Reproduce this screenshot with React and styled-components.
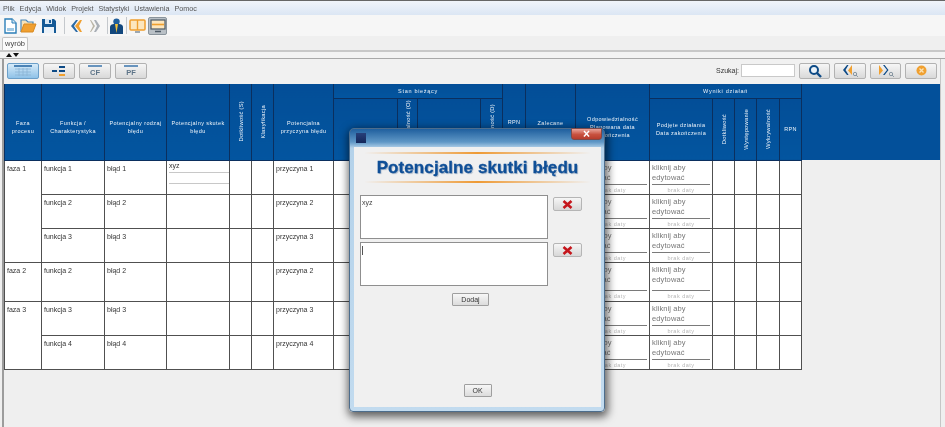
import React from "react";
import styled, { createGlobalStyle } from "styled-components";

const Global = createGlobalStyle`
  html, body { margin: 0; padding: 0; background: #efefef; }
  body { font-family: "Liberation Sans", Arial, sans-serif; overflow: hidden; }
`;

const Page = styled.div`
  position: relative;
  width: 945px;
  height: 427px;
  overflow: hidden;
  display: flex;
  flex-direction: column;
  background: #efefef;
  filter: blur(0.4px);
`;
const MenuBar = styled.div`
  height: 14px;
  border-top: 1px solid #666;
  display: flex;
  align-items: center;
  gap: 5px;
  padding-left: 3px;
  background: linear-gradient(#f0f4fa, #dbe6f4);
`;
const MenuItem = styled.span`
  font-size: 7.2px;
  color: #555;
`;
const ToolBar = styled.div`
  height: 21px;
  display: flex;
  align-items: center;
  padding-left: 4px;
  background: #f6f6f6;
`;
const ToolIcon = styled.svg`
  display: block;
  flex: none;
  margin-right: ${(p) => p.$mr || 0}px;
`;
const ToolSep = styled.div`
  width: 1px;
  height: 17px;
  background: #c4c8cc;
  margin-right: ${(p) => p.$mr}px;
`;
const ViewToggle = styled.div`
  width: 19px;
  height: 18px;
  margin-right: 1px;
  display: flex;
  align-items: center;
  justify-content: center;
  border-radius: 2px;
  background: ${(p) => (p.$on ? "#b9c0c6" : "transparent")};
  border: 1px solid ${(p) => (p.$on ? "#8a949c" : "transparent")};
  box-sizing: border-box;
`;
const TabStrip = styled.div`
  height: 14px;
  padding-left: 2px;
  display: flex;
  align-items: flex-end;
  border-bottom: 2px solid #c8c8c8;
`;
const Tab = styled.div`
  width: 26px;
  height: 13px;
  box-sizing: border-box;
  background: #fbfbfb;
  border: 1px solid #c4c4c4;
  border-bottom: 0;
  border-radius: 2px 2px 0 0;
  font-size: 7.5px;
  color: #444;
  text-align: center;
  line-height: 12px;
`;
const SplitArrows = styled.div`
  height: 6px;
  padding-left: 6px;
  display: flex;
  gap: 1px;
  align-items: center;
  background: #f3f3f3;
  border-bottom: 1px solid #a9a9a9;
`;
const Arrow = styled.i`
  width: 0;
  height: 0;
  border-left: 3px solid transparent;
  border-right: 3px solid transparent;
  ${(p) => (p.$up ? "border-bottom: 4px solid #111;" : "border-top: 4px solid #111;")}
`;
const Panel = styled.div`
  flex: 1;
  margin: 0 4px 0 2px;
  border-left: 2px solid #9c9c9c;
  border-right: 1px solid #c6c6c6;
  display: flex;
  flex-direction: column;
  min-height: 0;
`;
const ActionBar = styled.div`
  height: 25px;
  box-sizing: border-box;
  display: flex;
  align-items: center;
  padding: 0 3px 2px 3px;
  gap: 4px;
  background: #f1f1f1;
`;
const ActionButton = styled.button`
  width: ${(p) => p.$w || 32}px;
  height: 16px;
  margin: 0;
  padding: 0;
  display: flex;
  align-items: center;
  justify-content: center;
  border-radius: 2px;
  border: 1px solid ${(p) => (p.$active ? "#6b9fc9" : "#b2b2b2")};
  background: ${(p) =>
    p.$active
      ? "linear-gradient(#d7ebf9, #8fc2e8)"
      : "linear-gradient(#f6f6f6, #d9d9d9)"};
`;
const Spacer = styled.div`
  flex: 1;
`;
const SearchLabel = styled.span`
  font-size: 7px;
  color: #333;
  margin-right: -2px;
`;
const SearchInput = styled.div`
  width: 52px;
  height: 11px;
  background: #fff;
  border: 1px solid #c9c9c9;
`;
const TableWrap = styled.div`
  flex: 1;
  background: linear-gradient(#03509a 0 76px, transparent 76px);
  background-repeat: no-repeat;
`;
const Grid = styled.table`
  width: 798px;
  table-layout: fixed;
  border-collapse: collapse;
  background: #fff;
`;
const HCell = styled.th`
  background: linear-gradient(#034e97, #03559f);
  border: 1px solid #0b2f5e;
  border-top: 0;
  color: #eef4fa;
  font-weight: normal;
  font-size: 5.5px;
  line-height: 8px;
  letter-spacing: ${(p) => (p.$group ? 0.7 : 0.4)}px;
  padding: ${(p) => p.$pt || 0}px 0 0;
  text-align: center;
  vertical-align: middle;
  overflow: hidden;
  white-space: nowrap;
`;
const Rotated = styled.span`
  display: inline-block;
  vertical-align: middle;
  writing-mode: vertical-rl;
  transform: rotate(180deg);
  white-space: nowrap;
  font-size: 5.8px;
  letter-spacing: 0.25px;
`;
const Cell = styled.td`
  border: 1px solid #505050;
  padding: 0;
  vertical-align: top;
  font-size: 7px;
  color: #333;
`;
const CellText = styled.div`
  padding: 4px 0 0 2px;
`;
const EffectField = styled.div`
  height: 11px;
  margin-left: 2px;
  line-height: 10px;
  box-sizing: border-box;
  border-bottom: 1px solid #c8c8c8;
  &:first-child { height: 12px; }
`;
const EditCell = styled.div`
  height: ${(p) => p.$h}px;
  display: flex;
  flex-direction: column;
  box-sizing: border-box;
  padding: 0 2px;
`;
const EditText = styled.div`
  flex: 1;
  padding-top: 2px;
  font-size: 7.5px;
  line-height: 10.5px;
  color: #777;
  letter-spacing: 0.1px;
`;
const DateText = styled.div`
  height: 10px;
  border-top: 1px solid #7a7a7a;
  font-size: 5.5px;
  line-height: 10px;
  color: #b5b5b5;
  text-align: center;
  letter-spacing: 0.5px;
`;

const Modal = styled.div`
  position: absolute;
  left: 349px;
  top: 128px;
  width: 256px;
  height: 284px;
  box-sizing: border-box;
  padding: 18px 3px 4px 4px;
  display: flex;
  border-radius: 5px 5px 4px 4px;
  border: 1px solid #4d6d8c;
  background: linear-gradient(#1f5f9e 0, #5f97c6 13px, #b4d2ea 19px, #c2dbef 100%);
  box-shadow: 1px 3px 8px 2px rgba(0, 0, 0, 0.6);
`;
const ModalIcon = styled.div`
  position: absolute;
  left: 6px;
  top: 4px;
  width: 10px;
  height: 10px;
  background: linear-gradient(#27407a, #14275a);
`;
const CloseButton = styled.div`
  position: absolute;
  right: 2px;
  top: -1px;
  width: 31px;
  height: 12px;
  border-radius: 0 0 3px 3px;
  background: linear-gradient(#e9a49a, #c8513f 55%, #b63c2c);
  border: 1px solid #7d4a4a;
  box-sizing: border-box;
  color: #fff;
  font-size: 12px;
  font-weight: bold;
  line-height: 10px;
  text-align: center;
`;
const ModalBody = styled.div`
  flex: 1;
  background: #f0f0f0;
  display: flex;
  flex-direction: column;
  align-items: stretch;
  padding: 5px 0 10px;
  box-sizing: border-box;
`;
const TitleBox = styled.div`
  margin: 0 11px;
  height: 31px;
  box-sizing: border-box;
  border-style: solid;
  border-width: 2px 0;
  border-image: linear-gradient(90deg, transparent, #ee9a35 50%, transparent) 1;
  display: flex;
  align-items: center;
  justify-content: center;
`;
const Title = styled.h1`
  margin: 0;
  font-family: "Liberation Sans", Arial, sans-serif;
  font-size: 17px;
  font-weight: bold;
  color: #0f4f97;
  letter-spacing: 0.1px;
  -webkit-text-stroke: 0.3px #0f4f97;
  text-shadow: 1px 1px 1px #9fb0c4;
  white-space: nowrap;
`;
const EffectRow = styled.div`
  display: flex;
  margin: ${(p) => p.$mt}px 0 0 6px;
  align-items: flex-start;
  gap: 5px;
`;
const EffectArea = styled.div`
  width: 188px;
  height: 44px;
  background: #fff;
  border: 1px solid #8f8f8f;
  font-size: 7px;
  color: #444;
  padding: 3px 1px;
  box-sizing: border-box;
  line-height: 8px;
`;
const Caret = styled.span`
  display: inline-block;
  width: 1px;
  height: 9px;
  background: #555;
`;
const DeleteButton = styled.button`
  width: 29px;
  height: 14px;
  margin: ${(p) => p.$mt}px 0 0;
  padding: 0;
  display: flex;
  align-items: center;
  justify-content: center;
  background: linear-gradient(#f6f6f6, #d7d7d7);
  border: 1px solid #b5b5b5;
  border-radius: 2px;
`;
const Footer = styled.div`
  margin-top: 7px;
  display: flex;
  flex-direction: column;
  align-items: center;
  flex: 1;
`;
const DialogButton = styled.button`
  width: ${(p) => p.$w}px;
  height: 13px;
  margin: 0 ${(p) => p.$mr || 0}px 0 0;
  padding: 0;
  font-family: inherit;
  font-size: 7px;
  color: #333;
  background: linear-gradient(#f7f7f7, #dcdcdc);
  border: 1px solid #9f9f9f;
  border-radius: 1px;
`;

const NAVY = "#0d4a86";
const ORANGE = "#f0a030";

const DocIcon = () => (
  <ToolIcon width="13" height="16" viewBox="0 0 13 16" $mr={3}>
    <path d="M1 1h7l4 4v10H1z" fill="#fff" stroke="#2c7fb8" strokeWidth="1.4" />
    <path d="M8 1v4h4" fill="#cfe6f5" stroke="#2c7fb8" />
    <path d="M3 10h7v3H3z" fill="#9fc8e4" />
  </ToolIcon>
);
const FolderIcon = () => (
  <ToolIcon width="17" height="15" viewBox="0 0 17 15" $mr={4}>
    <path d="M1 14V2h5l2 2h5v3" fill="#f6e2b8" stroke="#4a87b8" strokeWidth="1.2" />
    <path d="M1 14l3-8h12l-3 8z" fill={ORANGE} stroke="#d98a20" />
  </ToolIcon>
);
const SaveIcon = () => (
  <ToolIcon width="16" height="16" viewBox="0 0 16 16" $mr={7}>
    <path d="M1 1h12l2 2v12H1z" fill="#155a96" />
    <path d="M4 1h7v5H4z" fill="#dbe9f5" />
    <path d="M3 9h10v6H3z" fill="#eaf2f9" />
    <path d="M8 2h2v3H8z" fill="#155a96" />
  </ToolIcon>
);
const BackIcon = () => (
  <ToolIcon width="11" height="12" viewBox="0 0 11 12" $mr={8}>
    <path d="M5 0 0 6l5 6h2L3 6l4-6z" fill="#2b6ba6" />
    <path d="M9 0 4 6l5 6h2L8 6l3-6z" fill={ORANGE} />
  </ToolIcon>
);
const ForwardIcon = () => (
  <ToolIcon width="10" height="12" viewBox="0 0 10 12" $mr={7}>
    <path d="M1 0l4 6-4 6H0l3-6-3-6z" fill="#b9b4a6" />
    <path d="M4 0h2l4 6-4 6H4l3-6z" fill="#a9afb6" />
  </ToolIcon>
);
const PersonIcon = () => (
  <ToolIcon width="13" height="16" viewBox="0 0 13 16" $mr={3}>
    <circle cx="6.5" cy="3.6" r="3.2" fill="#1f5f9c" />
    <path d="M0 16V9c0-2 2-3 4-3h5c2 0 4 1 4 3v7z" fill="#12477d" />
    <path d="M5 6h3L7 12l-.5 3L6 12z" fill="#f3c23a" />
  </ToolIcon>
);
const BookIcon = () => (
  <ToolIcon width="17" height="14" viewBox="0 0 17 14">
    <rect x="1" y="1" width="15" height="10" rx="1" fill="#fce6bd" stroke="#ef9f2e" strokeWidth="1.5" />
    <path d="M8.5 1v10" stroke="#ef9f2e" strokeWidth="1.4" />
    <path d="M6 13h5" stroke="#7f8e9a" strokeWidth="1.5" />
  </ToolIcon>
);
const MonitorIcon = () => (
  <ToolIcon width="16" height="14" viewBox="0 0 16 14">
    <rect x="1" y="1" width="14" height="9" fill="#fce6bd" stroke="#4d5a66" strokeWidth="1.2" />
    <path d="M2 5.5h12" stroke="#ef9f2e" strokeWidth="1.6" />
    <path d="M5 12.5h6" stroke="#4d5a66" strokeWidth="1.5" />
  </ToolIcon>
);
const TableGlyph = () => (
  <svg width="20" height="12" viewBox="0 0 20 12">
    <path d="M1 1h18" stroke="#2b6ba6" strokeWidth="1.6" />
    <path d="M2 4h16M2 7h16M2 10h16M6 3v8M10 3v8M14 3v8" stroke="#8bb4d4" strokeWidth="0.8" />
  </svg>
);
const TreeGlyph = () => (
  <svg width="15" height="12" viewBox="0 0 15 12">
    <path d="M0 5h5v2H0z" fill={NAVY} />
    <path d="M7 1h6v2H7zM7 5h6v2H7z" fill={NAVY} />
    <path d="M7 9h6v2H7z" fill={ORANGE} />
  </svg>
);
const LetterGlyph = ({ label }) => (
  <svg width="14" height="12" viewBox="0 0 14 12">
    <path d="M0 1h14" stroke="#2b6ba6" strokeWidth="1.4" />
    <text x="7" y="10" textAnchor="middle" fontSize="7.5" fontWeight="bold" fill="#5d7488" fontFamily="Liberation Sans">
      {label}
    </text>
  </svg>
);
const SearchGlyph = () => (
  <svg width="14" height="14" viewBox="0 0 14 14">
    <circle cx="6" cy="6" r="4" fill="#eaf2f9" stroke={NAVY} strokeWidth="2" />
    <path d="M9 9l4 4" stroke={NAVY} strokeWidth="2.4" />
  </svg>
);
const MiniLens = () => (
  <g>
    <circle cx="13" cy="10" r="1.7" fill="none" stroke="#7d8d9a" strokeWidth="0.9" />
    <path d="M14.2 11.2l1.6 1.6" stroke="#7d8d9a" />
  </g>
);
const PrevGlyph = () => (
  <svg width="16" height="13" viewBox="0 0 16 13">
    <path d="M5 1 1 6l4 5h1.6L3.5 6l3-5z" fill={NAVY} />
    <path d="M10 1 6 6.5l4 4.5V1z" fill={ORANGE} />
    <MiniLens />
  </svg>
);
const NextGlyph = () => (
  <svg width="16" height="13" viewBox="0 0 16 13">
    <path d="M1 1l4 5.5-4 4.5z" fill={ORANGE} />
    <path d="M5 1l4 5-4 5h1.6L10.5 6 6.6 1z" fill={NAVY} />
    <MiniLens />
  </svg>
);
const CancelGlyph = () => (
  <svg width="11" height="11" viewBox="0 0 11 11">
    <circle cx="5.5" cy="5.5" r="5" fill={ORANGE} />
    <path d="M3.5 3.5l4 4M7.5 3.5l-4 4" stroke="#fbe2b4" strokeWidth="1.3" />
  </svg>
);
const RedX = () => (
  <svg width="11" height="9" viewBox="0 0 11 9">
    <path d="M1.5 1l8 7M9.5 1l-8 7" stroke="#c5161c" strokeWidth="2.6" />
  </svg>
);

const widths = [37, 63, 62, 63, 22, 22, 60, 64, 20, 63, 22, 23, 50, 74, 63, 22, 22, 23, 22];

const rows = [
  { h: 33, faza: "faza 1", span: 3, f: "funkcja 1", b: "błąd 1", p: "przyczyna 1", effect: true },
  { h: 33, f: "funkcja 2", b: "błąd 2", p: "przyczyna 2" },
  { h: 33, f: "funkcja 3", b: "błąd 3", p: "przyczyna 3" },
  { h: 38, faza: "faza 2", span: 1, f: "funkcja 2", b: "błąd 2", p: "przyczyna 2" },
  { h: 33, faza: "faza 3", span: 2, f: "funkcja 3", b: "błąd 3", p: "przyczyna 3" },
  { h: 33, f: "funkcja 4", b: "błąd 4", p: "przyczyna 4" },
];

const Editable = ({ h }) => (
  <EditCell $h={h}>
    <EditText>kliknij aby<br />edytować</EditText>
    <DateText>brak daty</DateText>
  </EditCell>
);

const TopHeader = () => (
  <thead>
    <tr style={{ height: 14 }}>
      <HCell rowSpan={2} $pt={10}>Faza<br />procesu</HCell>
      <HCell rowSpan={2} $pt={10}>Funkcja /<br />Charakterystyka</HCell>
      <HCell rowSpan={2} $pt={10}>Potencjalny rodzaj<br />błędu</HCell>
      <HCell rowSpan={2} $pt={10}>Potencjalny skutek<br />błędu</HCell>
      <HCell rowSpan={2}><Rotated>Dotkliwość (S)</Rotated></HCell>
      <HCell rowSpan={2}><Rotated>Klasyfikacja</Rotated></HCell>
      <HCell rowSpan={2} $pt={10}>Potencjalna<br />przyczyna błędu</HCell>
      <HCell colSpan={4} $group>Stan bieżący</HCell>
      <HCell rowSpan={2}>RPN</HCell>
      <HCell rowSpan={2} $pt={10}>Zalecane<br />działania</HCell>
      <HCell rowSpan={2} $pt={10}>Odpowiedzialność<br />Planowana data<br />zakończenia</HCell>
      <HCell colSpan={5} $group>Wyniki działań</HCell>
    </tr>
    <tr style={{ height: 62 }}>
      <HCell $pt={30}>Obecne<br />działania</HCell>
      <HCell><Rotated>Występowalność (O)</Rotated></HCell>
      <HCell $pt={30}>Obecne<br />działania</HCell>
      <HCell><Rotated>Wykrywalność (D)</Rotated></HCell>
      <HCell>Podjęte działania<br />Data zakończenia</HCell>
      <HCell><Rotated>Dotkliwość</Rotated></HCell>
      <HCell><Rotated>Występowanie</Rotated></HCell>
      <HCell><Rotated>Wykrywalność</Rotated></HCell>
      <HCell>RPN</HCell>
    </tr>
  </thead>
);

export default function App() {
  return (
    <>
      <Global />
      <Page>
        <MenuBar>
          {["Plik", "Edycja", "Widok", "Projekt", "Statystyki", "Ustawienia", "Pomoc"].map((m) => (
            <MenuItem key={m}>{m}</MenuItem>
          ))}
        </MenuBar>
        <ToolBar>
          <DocIcon />
          <FolderIcon />
          <SaveIcon />
          <ToolSep $mr={6} />
          <BackIcon />
          <ForwardIcon />
          <ToolSep $mr={2} />
          <PersonIcon />
          <ToolSep $mr={1} />
          <ViewToggle><BookIcon /></ViewToggle>
          <ViewToggle $on><MonitorIcon /></ViewToggle>
        </ToolBar>
        <TabStrip>
          <Tab>wyrób</Tab>
        </TabStrip>
        <SplitArrows>
          <Arrow $up />
          <Arrow />
        </SplitArrows>
        <Panel>
          <ActionBar>
            <ActionButton $active><TableGlyph /></ActionButton>
            <ActionButton><TreeGlyph /></ActionButton>
            <ActionButton><LetterGlyph label="CF" /></ActionButton>
            <ActionButton><LetterGlyph label="PF" /></ActionButton>
            <Spacer />
            <SearchLabel>Szukaj:</SearchLabel>
            <SearchInput />
            <ActionButton $w={31}><SearchGlyph /></ActionButton>
            <ActionButton $w={32}><PrevGlyph /></ActionButton>
            <ActionButton $w={31}><NextGlyph /></ActionButton>
            <ActionButton $w={32}><CancelGlyph /></ActionButton>
          </ActionBar>
          <TableWrap>
            <Grid>
              <colgroup>
                {widths.map((w, i) => <col key={i} style={{ width: w }} />)}
              </colgroup>
              <TopHeader />
              <tbody>
                {rows.map((r, i) => (
                  <tr key={i} style={{ height: r.h + 1 }}>
                    {r.faza && <Cell rowSpan={r.span}><CellText>{r.faza}</CellText></Cell>}
                    <Cell><CellText>{r.f}</CellText></Cell>
                    <Cell><CellText>{r.b}</CellText></Cell>
                    <Cell>
                      {r.effect && (
                        <>
                          <EffectField>xyz</EffectField>
                          <EffectField />
                        </>
                      )}
                    </Cell>
                    <Cell />
                    <Cell />
                    <Cell><CellText>{r.p}</CellText></Cell>
                    <Cell />
                    <Cell />
                    <Cell />
                    <Cell />
                    <Cell />
                    <Cell />
                    <Cell><Editable h={r.h} /></Cell>
                    <Cell><Editable h={r.h} /></Cell>
                    <Cell />
                    <Cell />
                    <Cell />
                    <Cell />
                  </tr>
                ))}
              </tbody>
            </Grid>
          </TableWrap>
        </Panel>

        <Modal>
          <ModalIcon />
          <CloseButton>×</CloseButton>
          <ModalBody>
            <TitleBox>
              <Title>Potencjalne skutki błędu</Title>
            </TitleBox>
            <EffectRow $mt={12}>
              <EffectArea>xyz</EffectArea>
              <DeleteButton $mt={2}><RedX /></DeleteButton>
            </EffectRow>
            <EffectRow $mt={3}>
              <EffectArea><Caret /></EffectArea>
              <DeleteButton $mt={1}><RedX /></DeleteButton>
            </EffectRow>
            <Footer>
              <DialogButton $w={37} $mr={14}>Dodaj</DialogButton>
              <Spacer />
              <DialogButton $w={28}>OK</DialogButton>
            </Footer>
          </ModalBody>
        </Modal>
      </Page>
    </>
  );
}
